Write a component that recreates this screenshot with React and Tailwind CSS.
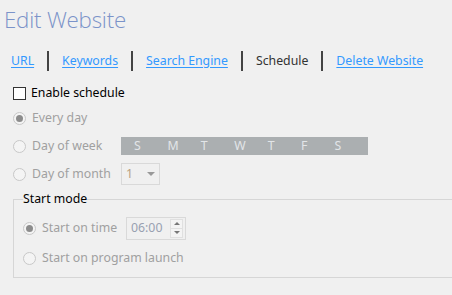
import React from 'react'

const FONT = { fontFamily: '"Noto Sans", "Open Sans", sans-serif' }

const TABS = [
  { label: 'URL', link: true },
  { label: 'Keywords', link: true },
  { label: 'Search Engine', link: true },
  { label: 'Schedule', link: false },
  { label: 'Delete Website', link: true },
]

const DAYS = ['S', 'M', 'T', 'W', 'T', 'F', 'S']

function Radio({ checked }) {
  return (
    <span className="flex h-[13px] w-[13px] shrink-0 items-center justify-center rounded-full border border-[#c8c8c8] bg-[#f4f4f4]">
      {checked && <span className="h-[7px] w-[7px] rounded-full bg-[#8c8c8c]" />}
    </span>
  )
}

function RadioRow({ checked, label, labelWidth, children, className = 'h-[28px]' }) {
  return (
    <div className={`flex items-center ${className}`}>
      <Radio checked={checked} />
      <span className={`ml-[6px] shrink-0 whitespace-nowrap text-[12.3px] text-[#a0a0a0] ${labelWidth || ''}`}>{label}</span>
      {children}
    </div>
  )
}

export default function App() {
  return (
    <div className="h-[295px] w-[452px] overflow-hidden bg-[#f0f0f0]" style={FONT}>
      <h1 className="pl-[4px] pt-[5px] text-[22.3px] font-light leading-[30px] tracking-[-0.2px] text-[#7b93c9]" style={{ fontFamily: '"Open Sans", sans-serif' }}>
        Edit Website
      </h1>

      <div className="mt-[16px] flex h-[20px] items-center pl-[11px] text-[12.3px]">
        {TABS.map((t, i) => (
          <React.Fragment key={t.label}>
            {i > 0 && <span className="mx-[13px] h-[20px] w-[2px] bg-[#444]" />}
            <span className={t.link ? 'text-[#3399ff] underline underline-offset-[2px]' : 'text-[#333]'}>
              {t.label}
            </span>
          </React.Fragment>
        ))}
      </div>

      <div className="mt-[13px] flex h-[18px] items-center pl-[13px]">
        <span className="h-[13px] w-[13px] border border-[#333] bg-white" />
        <span className="ml-[5px] text-[12.3px] text-black">Enable schedule</span>
      </div>

      <div className="mt-[2px] pl-[13px]">
        <RadioRow checked label="Every day" />
        <RadioRow label="Day of week" labelWidth="w-[89px]">
          <div className="flex h-[18px] w-[247px] items-center bg-[#abafb1] pl-[13px]">
            {DAYS.map((d, i) => (
              <span key={i} className="w-[35px] text-[12.3px] text-[#e2e5e8]">{d}</span>
            ))}
          </div>
        </RadioRow>
        <RadioRow label="Day of month" labelWidth="w-[89px]">
          <div className="flex h-[22px] w-[39px] items-center justify-between border border-[#d9d9d9] px-[4px]">
            <span className="text-[12.3px] text-[#b8a080]">1</span>
            <span className="h-0 w-0 border-x-[4px] border-t-[4px] border-x-transparent border-t-[#999]" />
          </div>
        </RadioRow>
      </div>

      <fieldset className="ml-[13px] mt-[3px] h-[87px] w-[460px] border border-[#d6d6d6] pl-[9px]">
        <legend className="text-[12.3px] leading-[16px] text-black">Start mode</legend>
        <div className="mt-[6px]">
          <RadioRow checked label="Start on time" labelWidth="w-[75px]" className="h-[30px]">
            <div className="ml-[9px] flex h-[23px] w-[60px] items-center border border-[#d9d9d9] pl-[4px]">
              <span className="text-[12.3px] text-[#98a0b0]">06:00</span>
              <div className="ml-auto mr-[2px] flex h-[19px] w-[13px] flex-col border border-[#e0e0e0] bg-[#f4f4f4]">
                <span className="flex flex-1 items-center justify-center">
                  <span className="h-0 w-0 border-x-[3px] border-b-[3px] border-x-transparent border-b-[#777]" />
                </span>
                <span className="flex flex-1 items-center justify-center border-t border-[#e0e0e0]">
                  <span className="h-0 w-0 border-x-[3px] border-t-[3px] border-x-transparent border-t-[#777]" />
                </span>
              </div>
            </div>
          </RadioRow>
          <RadioRow label="Start on program launch" className="h-[30px]" />
        </div>
      </fieldset>
    </div>
  )
}
